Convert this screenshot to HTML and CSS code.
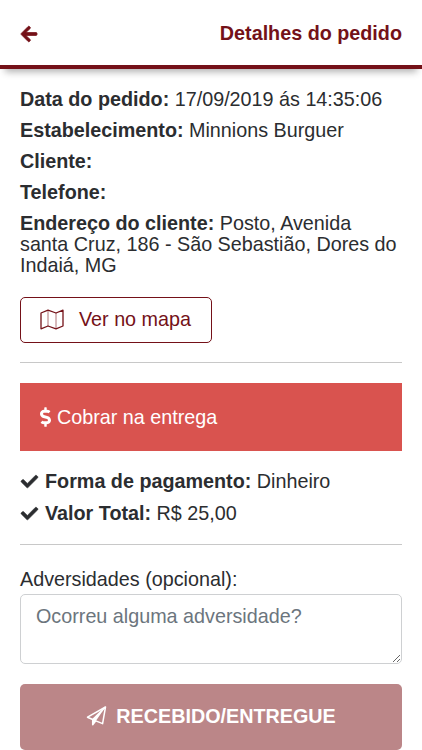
FILE: index.html
```html
<!DOCTYPE html>
<html lang="pt-BR">
<head>
<meta charset="utf-8">
<meta name="viewport" content="width=device-width, initial-scale=1">
<title>Detalhes do pedido</title>
<link rel="stylesheet" href="styles.css">
</head>
<body>
<header class="topbar">
  <a class="back" aria-label="Voltar"><svg class="icon-arrow" viewBox="0 32 448 448"><path fill="currentColor" stroke="currentColor" stroke-width="22" d="M257.5 445.1l-22.2 22.2c-9.4 9.4-24.6 9.4-33.9 0L7 273c-9.4-9.4-9.4-24.6 0-33.9L201.4 44.7c9.4-9.4 24.6-9.4 33.9 0l22.2 22.2c9.5 9.5 9.3 25-.4 34.3L136.6 216H424c13.3 0 24 10.7 24 24v32c0 13.3-10.7 24-24 24H136.6l120.5 114.8c9.8 9.3 10 24.8.4 34.3z"/></svg></a>
  <h1 class="title">Detalhes do pedido</h1>
</header>
<main class="content">
  <p class="row"><b>Data do pedido:</b> 17/09/2019 ás 14:35:06</p>
  <p class="row"><b>Estabelecimento:</b> Minnions Burguer</p>
  <p class="row"><b>Cliente:</b></p>
  <p class="row"><b>Telefone:</b></p>
  <p class="row"><b>Endereço do cliente:</b> Posto, Avenida santa Cruz, 186 - São Sebastião, Dores do Indaiá, MG</p>
  <button class="map-button" type="button">
    <svg class="icon-map" viewBox="0 0 24 21" fill="none" stroke="currentColor" stroke-linejoin="round"><path stroke-width="1.3" d="M1 4 8 1.2l8 2.8 7-2.8V17l-7 2.8L8 17l-7 2.8z"/><path stroke-width=".9" opacity=".65" d="M8 1.2V17M16 4v15.8"/></svg>
    <span>Ver no mapa</span>
  </button>
  <hr class="divider">
  <div class="charge">
    <svg class="icon-dollar" viewBox="0 0 288 512"><path fill="currentColor" d="M209.2 233.4l-108-31.6C88.7 198.2 80 186.5 80 173.5c0-16.3 13.2-29.5 29.5-29.5h66.3c12.2 0 24.2 3.7 34.2 10.5 6.1 4.1 14.3 3.1 19.5-2l34.8-34c7.1-6.9 6.1-18.4-1.8-24.5C238 74.8 207.4 64.1 176 64V16c0-8.8-7.2-16-16-16h-32c-8.8 0-16 7.2-16 16v48h-2.5C45.8 64-5.4 118.7.5 183.6c4.2 46.1 39.4 83.6 83.8 96.6l102.5 30c12.5 3.7 21.2 15.3 21.2 28.3 0 16.3-13.2 29.5-29.5 29.5h-66.3C100 368 88 364.3 78 357.5c-6.1-4.1-14.3-3.1-19.5 2l-34.8 34c-7.1 6.9-6.1 18.4 1.8 24.5 24.5 19.2 55.1 29.9 86.5 30v48c0 8.8 7.2 16 16 16h32c8.8 0 16-7.2 16-16v-48.2c46.6-.9 90.3-28.6 105.7-72.7 21.5-61.6-14.6-124.8-72.5-141.7z"/></svg>
    <span>Cobrar na entrega</span>
  </div>
  <p class="row check-row"><svg class="icon-check" viewBox="0 64 512 384"><path fill="currentColor" stroke="currentColor" stroke-width="16" d="M173.898 439.404l-166.4-166.4c-9.997-9.997-9.997-26.206 0-36.204l36.203-36.204c9.997-9.998 26.207-9.998 36.204 0L192 312.69 432.095 72.596c9.997-9.997 26.207-9.997 36.204 0l36.203 36.204c9.997 9.997 9.997 26.206 0 36.204l-294.4 294.401c-9.998 9.997-26.207 9.997-36.204-.001z"/></svg><span><b>Forma de pagamento:</b> Dinheiro</span></p>
  <p class="row check-row"><svg class="icon-check" viewBox="0 64 512 384"><path fill="currentColor" stroke="currentColor" stroke-width="16" d="M173.898 439.404l-166.4-166.4c-9.997-9.997-9.997-26.206 0-36.204l36.203-36.204c9.997-9.998 26.207-9.998 36.204 0L192 312.69 432.095 72.596c9.997-9.997 26.207-9.997 36.204 0l36.203 36.204c9.997 9.997 9.997 26.206 0 36.204l-294.4 294.401c-9.998 9.997-26.207 9.997-36.204-.001z"/></svg><span><b>Valor Total:</b> R$ 25,00</span></p>
  <hr class="divider divider-form">
  <label class="label" for="note">Adversidades (opcional):</label>
  <textarea class="note" id="note" placeholder="Ocorreu alguma adversidade?"></textarea>
  <button class="submit" type="button">
    <svg class="icon-plane" viewBox="0 0 20 20" fill="none" stroke="currentColor" stroke-width="1.5" stroke-linejoin="round"><path d="M19 1 1 11.2l5.2 2.3v5.3l3.1-3.9 6.8 2.7z"/><path d="M19 1 6.2 13.5"/><path fill="currentColor" stroke="none" d="M19 1 6.2 13.5v5.3l3.1-3.9z"/></svg>
    <span>RECEBIDO/ENTREGUE</span>
  </button>
</main>
</body>
</html>
```
FILE: styles.css
```css
* { box-sizing: border-box; }
body {
  margin: 0;
  height: 750px;
  overflow: hidden;
  background: #fff;
  color: #2b2d30;
  font: 19.75px/21px "Liberation Sans", Arial, sans-serif;
}
svg { display: block; flex: none; }
button { font: inherit; }
.topbar {
  display: flex;
  justify-content: space-between;
  align-items: center;
  height: 69px;
  padding: 2px 20px 0 21px;
  border-bottom: 4px solid #741118;
  box-shadow: 0 8px 7px -5px rgba(0, 0, 0, .3);
  color: #741118;
}
.title { margin: 0; font-size: 19.75px; line-height: 21px; }
.icon-arrow { width: 16px; height: 16px; overflow: visible; }
.content { padding: 20px 20px 0; }
.row { margin: 0 0 10.1px; }
.map-button {
  display: flex;
  align-items: center;
  width: 192px;
  height: 46px;
  margin: 20.2px 0 19.8px;
  padding: 0 19px;
  gap: 15px;
  border: 1.5px solid #741118;
  border-radius: 5px;
  background: #fff;
  color: #741118;
  white-space: nowrap;
}
.icon-map { width: 24px; height: 21px; }
.divider { margin: 0; border: 0; height: 1px; background: #c8c8c8; }
.charge {
  display: flex;
  align-items: center;
  gap: 6px;
  height: 68px;
  margin: 20px 0;
  padding: 0 20px;
  background: #d9534f;
  color: #fff;
}
.icon-dollar { width: 11px; height: 20px; }
.check-row { display: flex; align-items: center; gap: 7px; margin-bottom: 10.7px; padding-left: 1px; }
.icon-check { width: 17px; height: 13px; overflow: visible; }
.divider-form { margin: 20px 0 24px; }
.label { display: block; }
.note {
  display: block;
  width: 100%;
  height: 70px;
  margin: 4px 0 20px;
  padding: 11px 15px;
  border: 1px solid #ced0d2;
  border-radius: 5px;
  background: #fff;
  font: inherit;
  resize: vertical;
}
.note::placeholder { color: #6c757d; opacity: 1; }
.submit {
  display: flex;
  align-items: center;
  justify-content: center;
  gap: 9px;
  width: 100%;
  height: 66px;
  padding: 0 6px 2px;
  border: 0;
  border-radius: 5px;
  background: #bb8688;
  color: #fff;
  font-weight: bold;
}
.icon-plane { width: 21px; height: 20px; }
```
